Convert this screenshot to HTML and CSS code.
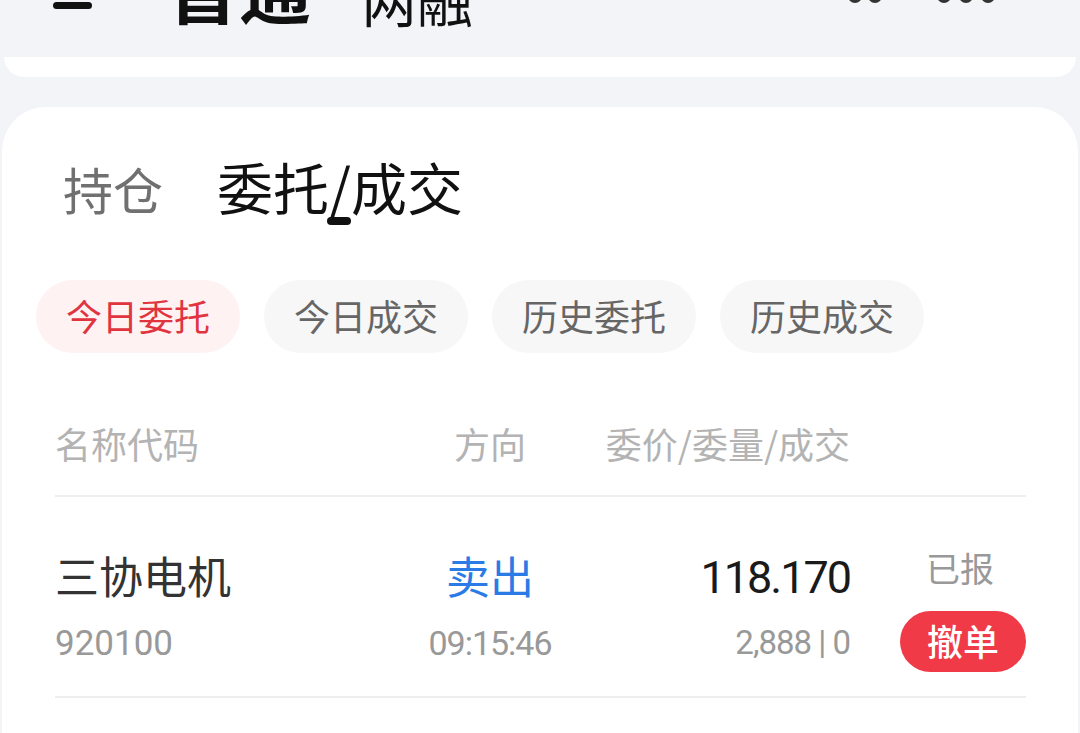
FILE: index.html
```html
<!DOCTYPE html>
<html lang="zh-CN">
<head>
  <meta charset="UTF-8" />
  <title>委托/成交</title>
  <link rel="stylesheet" href="styles.css">
</head>
<body>
  <div class="topbar">
    <span class="menu-bar"></span>
    <span class="mode mode-on">普通</span>
    <span class="mode">两融</span>
    <span class="dots"><i></i><i></i></span>
    <span class="dots dots-more"><i></i><i></i><i></i></span>
  </div>
  <div class="strip"></div>

  <div class="card">
    <div class="tabs">
      <span class="tab">持仓</span>
      <span class="tab tab-on">委托/成交</span>
    </div>

    <div class="chips">
      <span class="chip chip-on">今日委托</span>
      <span class="chip">今日成交</span>
      <span class="chip">历史委托</span>
      <span class="chip">历史成交</span>
    </div>

    <div class="orders">
      <div class="thead">
        <span>名称代码</span>
        <span class="c-dir">方向</span>
        <span class="c-price">委价/委量/成交</span>
        <span></span>
      </div>

      <div class="row">
        <div class="cell">
          <div class="name">三协电机</div>
          <div class="code">920100</div>
        </div>
        <div class="cell c-dir">
          <div class="dir sell">卖出</div>
          <div class="time">09:15:46</div>
        </div>
        <div class="cell c-price">
          <div class="price">118.170</div>
          <div class="qty">2,888 | 0</div>
        </div>
        <div class="cell c-status">
          <div class="status">已报</div>
          <button class="cancel">撤单</button>
        </div>
      </div>
    </div>
  </div>
</body>
</html>
```

FILE: styles.css
```css
* {
  box-sizing: border-box;
}

body {
  margin: 0;
  background-color: #f3f4f8;
  font-family: "Noto Sans CJK SC", "Noto Sans", sans-serif;
  overflow: hidden;
}

/* top bar, mostly scrolled out of view */
.topbar {
  height: 57px;
  display: flex;
  align-items: flex-end;
  padding: 0 85px 0 53px;
}

.menu-bar {
  width: 39px;
  height: 7px;
  border-radius: 4px;
  background: #111;
  margin-bottom: 48px;
}

.mode {
  font-size: 56px;
  line-height: 1;
  color: #111;
  margin-left: 50px;
  margin-bottom: 31px;
}

.mode-on {
  font-size: 72px;
  font-weight: 700;
  margin-left: 75px;
  margin-bottom: 34px;
}

.dots {
  display: flex;
  gap: 6px;
  margin-left: auto;
  margin-bottom: 54px;
}

.dots i {
  width: 14px;
  height: 14px;
  border-radius: 50%;
  background: #333;
}

.dots-more {
  margin-left: 55px;
  gap: 8px;
}

.strip {
  height: 20px;
  margin: 0 4px;
  background: #fff;
  border-radius: 0 0 28px 28px;
}

/* main card */
.card {
  margin: 30px 2px 0;
  background: #fff;
  border-radius: 44px 44px 0 0;
  padding: 51px 34px 0;
  min-height: 700px;
}

.tabs {
  display: flex;
  align-items: baseline;
  gap: 54px;
  padding-left: 27px;
}

.tab {
  font-size: 50px;
  line-height: 1;
  color: #707070;
}

.tab-on {
  position: relative;
  font-size: 56px;
  color: #111;
}

.tab-on::after {
  content: "";
  position: absolute;
  left: 50%;
  top: 59px;
  width: 24px;
  height: 8px;
  margin-left: -13px;
  border-radius: 4px;
  background: #111;
}

.chips {
  display: flex;
  gap: 24px;
  margin-top: 66px;
}

.chip {
  width: 204px;
  height: 73px;
  padding-bottom: 4px;
  border-radius: 37px;
  background: #f7f7f7;
  color: #666;
  font-size: 36px;
  line-height: 1;
  display: flex;
  align-items: center;
  justify-content: center;
}

.chip-on {
  background: #fff2f2;
  color: #e0343f;
}

/* order table */
.orders {
  margin-top: 72px;
  padding: 0 18px 0 19px;
}

.thead,
.row {
  display: grid;
  grid-template-columns: 355px 160px 280px 1fr;
  border-bottom: 2px solid #eeeeee;
}

.thead {
  font-size: 36px;
  line-height: 1;
  color: #b3b3b3;
  padding-bottom: 34px;
  white-space: nowrap;
}

.c-dir {
  text-align: center;
}

.c-price {
  text-align: right;
}

.row {
  height: 201px;
  padding-top: 56px;
  align-items: start;
}

.name,
.dir {
  font-size: 44px;
  line-height: 1;
  color: #333;
}

.sell {
  color: #2b7be6;
}

.code,
.time,
.price,
.qty {
  font-family: Roboto, "Liberation Sans", sans-serif;
  line-height: 1;
}

.code,
.time {
  font-size: 35px;
  color: #999;
  margin-top: 29px;
}

.time {
  font-size: 34px;
  letter-spacing: -1px;
}

.price {
  font-size: 45px;
  color: #1a1a1a;
  letter-spacing: -2px;
  margin-top: 2px;
}

.qty {
  font-size: 33px;
  color: #999;
  letter-spacing: -1px;
  margin-top: 26px;
}

.c-status {
  justify-self: end;
  width: 126px;
  display: flex;
  flex-direction: column;
  align-items: center;
}

.status {
  font-size: 34px;
  line-height: 1;
  color: #999;
  margin-top: -2px;
  margin-right: 6px;
}

.cancel {
  width: 126px;
  height: 61px;
  margin-top: 26px;
  border: none;
  border-radius: 31px;
  background: #f03a47;
  color: #fff;
  font-family: inherit;
  font-size: 36px;
  font-weight: 500;
  padding: 0 0 3px;
}
```
